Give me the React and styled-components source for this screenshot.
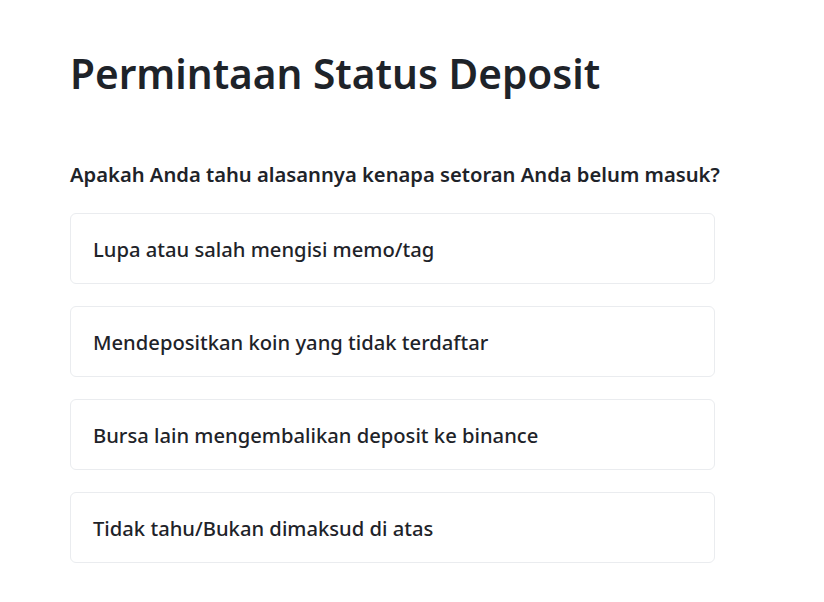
import styled, { createGlobalStyle } from "styled-components";

const GlobalStyle = createGlobalStyle`
  body {
    margin: 0;
    background: #ffffff;
    font-family: "Noto Sans", "Open Sans", sans-serif;
    color: #1e2329;
  }
`;

const Page = styled.div`
  padding: 46px 70px 40px 70px;
  width: 645px;
`;

const Title = styled.h1`
  margin: 0;
  font-size: 40.6px;
  line-height: 56px;
  font-weight: 600;
  color: #1e2329;
`;

const Question = styled.h3`
  margin: 58px 0 0 0;
  font-size: 20.2px;
  line-height: 28px;
  font-weight: 600;
  white-space: nowrap;
`;

const Options = styled.div`
  display: flex;
  flex-direction: column;
  gap: 22px;
  margin-top: 25px;
`;

const Option = styled.div`
  height: 71px;
  box-sizing: border-box;
  display: flex;
  align-items: center;
  padding: 0 22px;
  border: 1px solid #eaecef;
  border-radius: 6px;
  font-size: 20.2px;
  font-weight: 500;
  cursor: pointer;
`;

const options = [
  "Lupa atau salah mengisi memo/tag",
  "Mendepositkan koin yang tidak terdaftar",
  "Bursa lain mengembalikan deposit ke binance",
  "Tidak tahu/Bukan dimaksud di atas",
];

export default function App() {
  return (
    <>
      <GlobalStyle />
      <Page>
        <Title>Permintaan Status Deposit</Title>
        <Question>Apakah Anda tahu alasannya kenapa setoran Anda belum masuk?</Question>
        <Options>
          {options.map((o) => (
            <Option key={o}>{o}</Option>
          ))}
        </Options>
      </Page>
    </>
  );
}
